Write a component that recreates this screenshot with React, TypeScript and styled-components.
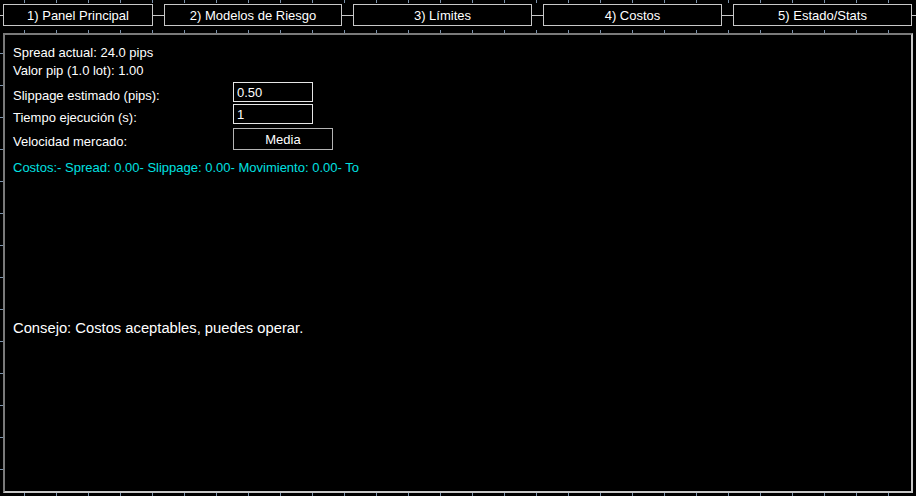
import * as React from "react";
import styled, { createGlobalStyle } from "styled-components";

const GlobalStyle = createGlobalStyle`
  html, body {
    margin: 0;
    padding: 0;
    background: #000;
    overflow: hidden;
  }
  body {
    font-family: "Liberation Sans", Arial, sans-serif;
    color: #fff;
  }
`;

const tabs = [
  { label: "1) Panel Principal", width: 150 },
  { label: "2) Modelos de Riesgo", width: 178 },
  { label: "3) Límites", width: 179 },
  { label: "4) Costos", width: 179 },
  { label: "5) Estado/Stats", width: 179 },
];

export default function App() {
  return (
    <>
      <GlobalStyle />
      <Page>
        <TickStrip height={4} />
        <TabBar>
          {tabs.map((t) => (
            <Tab key={t.label} width={t.width}>
              {t.label}
            </Tab>
          ))}
        </TabBar>
        <TickStrip height={7} bottom />
        <MainRow>
          <SideTicks />
          <Panel>
            <InfoLine>Spread actual: 24.0 pips</InfoLine>
            <InfoLine>Valor pip (1.0 lot): 1.00</InfoLine>
            <Form>
              <FieldRow>
                <Label>Slippage estimado (pips):</Label>
                <Input defaultValue="0.50" />
              </FieldRow>
              <FieldRow>
                <Label>Tiempo ejecución (s):</Label>
                <Input defaultValue="1" />
              </FieldRow>
              <FieldRow tall>
                <Label>Velocidad mercado:</Label>
                <SpeedButton>Media</SpeedButton>
              </FieldRow>
            </Form>
            <CostLine>
              Costos:- Spread: 0.00- Slippage: 0.00- Movimiento: 0.00- To
            </CostLine>
            <Advice>Consejo: Costos aceptables, puedes operar.</Advice>
          </Panel>
        </MainRow>
        <TickStrip height={3} />
      </Page>
    </>
  );
}

const Page = styled.div`
  width: 916px;
  height: 496px;
  display: flex;
  flex-direction: column;
  background: #000;
`;

interface TickStripProps {
  readonly height: number;
  readonly bottom?: boolean;
}

const TickStrip = styled.div<TickStripProps>`
  height: ${(p) => p.height}px;
  flex-shrink: 0;
  background-image: repeating-linear-gradient(
    to right,
    transparent 0 24px,
    #7d93ab 24px 25px,
    transparent 25px 32px
  );
  background-size: 100% 3px;
  background-repeat: no-repeat;
  background-position: ${(p) => (p.bottom ? "0 bottom" : "0 top")};
`;

const TabBar = styled.div`
  display: flex;
  gap: 11px;
  padding-left: 3px;
  height: 22px;
  background: linear-gradient(#c8c8c8, #c8c8c8) 0 11px / 100% 1px no-repeat;
`;

interface TabProps {
  readonly width: number;
}

const Tab = styled.div<TabProps>`
  box-sizing: border-box;
  width: ${(p) => p.width}px;
  height: 22px;
  border: 1px solid #c8c8c8;
  background: #000;
  color: #fff;
  font-size: 13px;
  display: flex;
  align-items: center;
  justify-content: center;
  white-space: nowrap;
`;

const MainRow = styled.div`
  display: flex;
  height: 460px;
`;

const SideTicks = styled.div`
  width: 3px;
  background-image: repeating-linear-gradient(
    to bottom,
    transparent 0 20px,
    #7d93ab 20px 21px,
    transparent 21px 32px
  );
`;

const Panel = styled.div`
  box-sizing: border-box;
  width: 910px;
  height: 460px;
  background: #000;
  border-style: solid;
  border-width: 2px;
  border-color: #7a7a7a #c8c8c8 #c8c8c8 #7a7a7a;
  padding: 9px 0 0 8px;
  display: flex;
  flex-direction: column;
`;

const InfoLine = styled.div`
  font-size: 13px;
  line-height: 17.5px;
  height: 17.5px;
  white-space: nowrap;
`;

const Form = styled.div`
  display: flex;
  flex-direction: column;
  gap: 2px;
  margin-top: 3px;
`;

interface FieldRowProps {
  readonly tall?: boolean;
}

const FieldRow = styled.div<FieldRowProps>`
  display: grid;
  grid-template-columns: 220px auto;
  align-items: start;
  height: ${(p) => (p.tall ? 22 : 20)}px;
  margin-top: ${(p) => (p.tall ? 2 : 0)}px;
`;

const Label = styled.span`
  font-size: 13px;
  line-height: 17px;
  padding-top: 5px;
  white-space: nowrap;
`;

const Input = styled.input`
  box-sizing: border-box;
  width: 80px;
  height: 20px;
  margin: 0;
  padding: 0 0 0 3px;
  border: 1px solid #e6e6e6;
  background: #000;
  color: #fff;
  font-family: "Liberation Sans", Arial, sans-serif;
  font-size: 13px;
  outline: none;
`;

const SpeedButton = styled.button`
  box-sizing: border-box;
  width: 100px;
  height: 22px;
  margin: 0;
  padding: 0;
  border: 1px solid #b4b4b4;
  background: #000;
  color: #fff;
  font-family: "Liberation Sans", Arial, sans-serif;
  font-size: 13px;
  cursor: pointer;
`;

const CostLine = styled.div`
  margin-top: 9px;
  font-size: 13px;
  line-height: 17px;
  color: #00e0e0;
  white-space: nowrap;
`;

const Advice = styled.div`
  margin-top: 144px;
  font-size: 14.75px;
  line-height: 17px;
  color: #fff;
  white-space: nowrap;
`;
